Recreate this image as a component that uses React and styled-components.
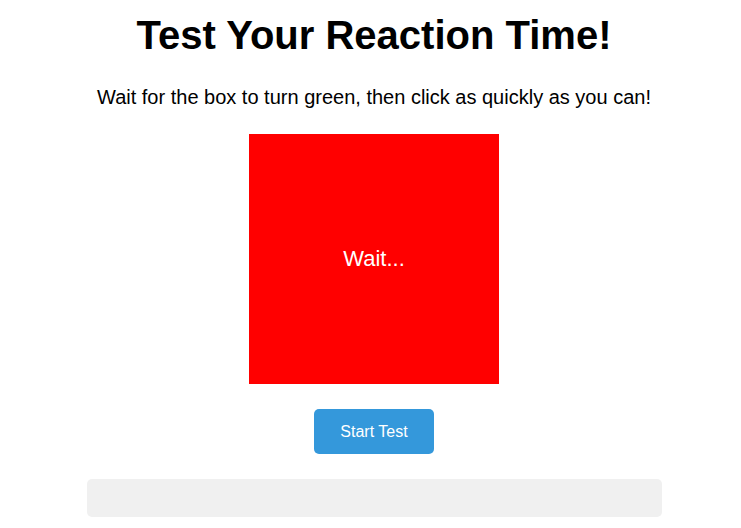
import React from "react";
import styled, { createGlobalStyle } from "styled-components";

const GlobalStyle = createGlobalStyle`
  html, body {
    margin: 0;
    padding: 0;
    background: #ffffff;
  }
  body {
    font-family: "Liberation Sans", Arial, sans-serif;
    color: #000000;
  }
  * { box-sizing: border-box; }
`;

const Page = styled.div`
  display: flex;
  flex-direction: column;
  align-items: center;
  padding: 12px 0 0 7px;
  text-align: center;
`;

const Title = styled.h1`
  margin: 0;
  font-size: 40px;
  line-height: 46px;
  font-weight: 700;
`;

const Subtitle = styled.p`
  margin: 28px 0 0;
  font-size: 20px;
  line-height: 23px;
`;

const ReactionBox = styled.div`
  margin-top: 25px;
  width: 250px;
  height: 250px;
  background: ${(p) => p.$color};
  color: #ffffff;
  font-size: 22px;
  display: flex;
  align-items: center;
  justify-content: center;
  cursor: pointer;
  user-select: none;
`;

const StartButton = styled.button`
  margin-top: 25px;
  width: 120px;
  height: 45px;
  padding: 0;
  border: none;
  border-radius: 5px;
  background: #3498db;
  color: #ffffff;
  font-family: "Liberation Sans", Arial, sans-serif;
  font-size: 16px;
  cursor: pointer;
`;

const Result = styled.div`
  margin-top: 25px;
  width: 575px;
  min-height: 38px;
  padding: 10px;
  border-radius: 5px;
  background: #f0f0f0;
  font-size: 18px;
`;

export default function App() {
  return (
    <>
      <GlobalStyle />
      <Page>
        <Title>Test Your Reaction Time!</Title>
        <Subtitle>Wait for the box to turn green, then click as quickly as you can!</Subtitle>
        <ReactionBox $color="#ff0000">Wait...</ReactionBox>
        <StartButton>Start Test</StartButton>
        <Result />
      </Page>
    </>
  );
}
